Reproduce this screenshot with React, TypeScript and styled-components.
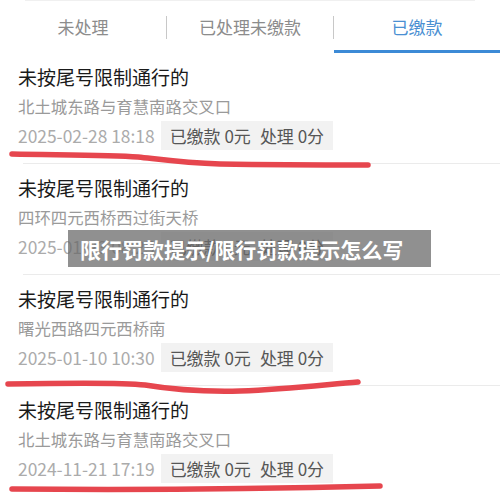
import React from "react"
import styled, { createGlobalStyle } from "styled-components"

const GlobalStyle = createGlobalStyle`
  html, body {
    margin: 0;
    padding: 0;
    background: #fff;
    font-family: "Noto Sans CJK SC", "Noto Sans", sans-serif;
  }
`

interface Record {
  title: string
  place: string
  time: string
}

const records: Record[] = [
  { title: "未按尾号限制通行的", place: "北土城东路与育慧南路交叉口", time: "2025-02-28 18:18" },
  { title: "未按尾号限制通行的", place: "四环四元西桥西过街天桥", time: "2025-01-23 08:25" },
  { title: "未按尾号限制通行的", place: "曙光西路四元西桥南", time: "2025-01-10 10:30" },
  { title: "未按尾号限制通行的", place: "北土城东路与育慧南路交叉口", time: "2024-11-21 17:19" },
]

const tabs = ["未处理", "已处理未缴款", "已缴款"]

export default function App() {
  const active = 2
  return (
    <Page>
      <GlobalStyle />
      <TopRule />
      <TabBar>
        {tabs.map((t, i) => (
          <React.Fragment key={t}>
            {i > 0 && <TabDivider />}
            <Tab active={i === active}>{t}</Tab>
          </React.Fragment>
        ))}
      </TabBar>

      {records.map((r, i) => (
        <React.Fragment key={i}>
          <Item>
            <Title>{r.title}</Title>
            <Place>{r.place}</Place>
            <Meta>
              <Time>{r.time}</Time>
              <Badge>
                <span>已缴款 0元</span>
                <BadgePart>处理 0分</BadgePart>
              </Badge>
            </Meta>
          </Item>
          {i < records.length - 1 && <Rule />}
        </React.Fragment>
      ))}

      <Marks viewBox="0 0 500 498" width="500" height="498">
        <path d="M12 154 C 60 155, 110 155, 138 157 C 165 160, 185 163, 220 164 C 280 165, 330 165, 368 165" />
        <path d="M8 384 C 60 383, 120 382, 145 385 C 175 390, 200 392, 240 391 C 290 389, 330 384, 358 382" />
        <path d="M12 489 C 120 490, 260 489, 380 486" />
      </Marks>

      <Banner>限行罚款提示/限行罚款提示怎么写</Banner>
    </Page>
  )
}

const Page = styled.div`
  position: relative;
  width: 500px;
  height: 498px;
  overflow: hidden;
  background: #fff;
`

const TopRule = styled.div`
  height: 1px;
  margin: 0 25px;
  background: #f0f0f0;
`

const TabBar = styled.div`
  display: grid;
  grid-template-columns: 1fr 1px 1fr 1px 1fr;
  height: 52px;
`

const TabDivider = styled.div`
  align-self: start;
  margin-top: 15px;
  height: 23px;
  background: #c8c8c8;
`

const Tab = styled.div<{ active?: boolean }>`
  display: flex;
  align-items: center;
  justify-content: center;
  padding-top: 2px;
  font-size: 17px;
  color: ${p => (p.active ? "#4a8fd2" : "#8c8c8c")};
  border-bottom: 3px solid ${p => (p.active ? "#3c8ad6" : "transparent")};
`

const Item = styled.div`
  display: flex;
  flex-direction: column;
  padding: 13px 0 13px 18px;
`

const Title = styled.div`
  font-size: 19px;
  line-height: 22px;
  color: #1a1a1a;
`

const Place = styled.div`
  margin-top: 7px;
  font-size: 16.4px;
  line-height: 22px;
  color: #9a9a9a;
`

const Meta = styled.div`
  display: flex;
  align-items: center;
  gap: 6px;
  margin-top: 4px;
  height: 29px;
`

const Time = styled.span`
  font-size: 17.4px;
  color: #ababab;
`

const Badge = styled.div`
  display: flex;
  align-items: center;
  height: 29px;
  padding: 0 9px;
  background: #f2f2f2;
  font-size: 17px;
  color: #565656;
  white-space: pre;
`

const BadgePart = styled.span`
  margin-left: 9px;
`

const Rule = styled.div`
  height: 1px;
  margin-left: 23px;
  background: #ebebeb;
`

const Marks = styled.svg`
  position: absolute;
  top: 0;
  left: 0;
  pointer-events: none;

  path {
    fill: none;
    stroke: #e6464e;
    stroke-width: 5.5;
    stroke-linecap: round;
  }
`

const Banner = styled.div`
  position: absolute;
  left: 68px;
  top: 230px;
  width: 363px;
  height: 37px;
  box-sizing: border-box;
  padding-left: 12px;
  display: flex;
  align-items: center;
  background: rgba(105, 105, 105, 0.74);
  color: #fff;
  font-size: 21px;
  font-weight: 700;
  white-space: nowrap;
`
